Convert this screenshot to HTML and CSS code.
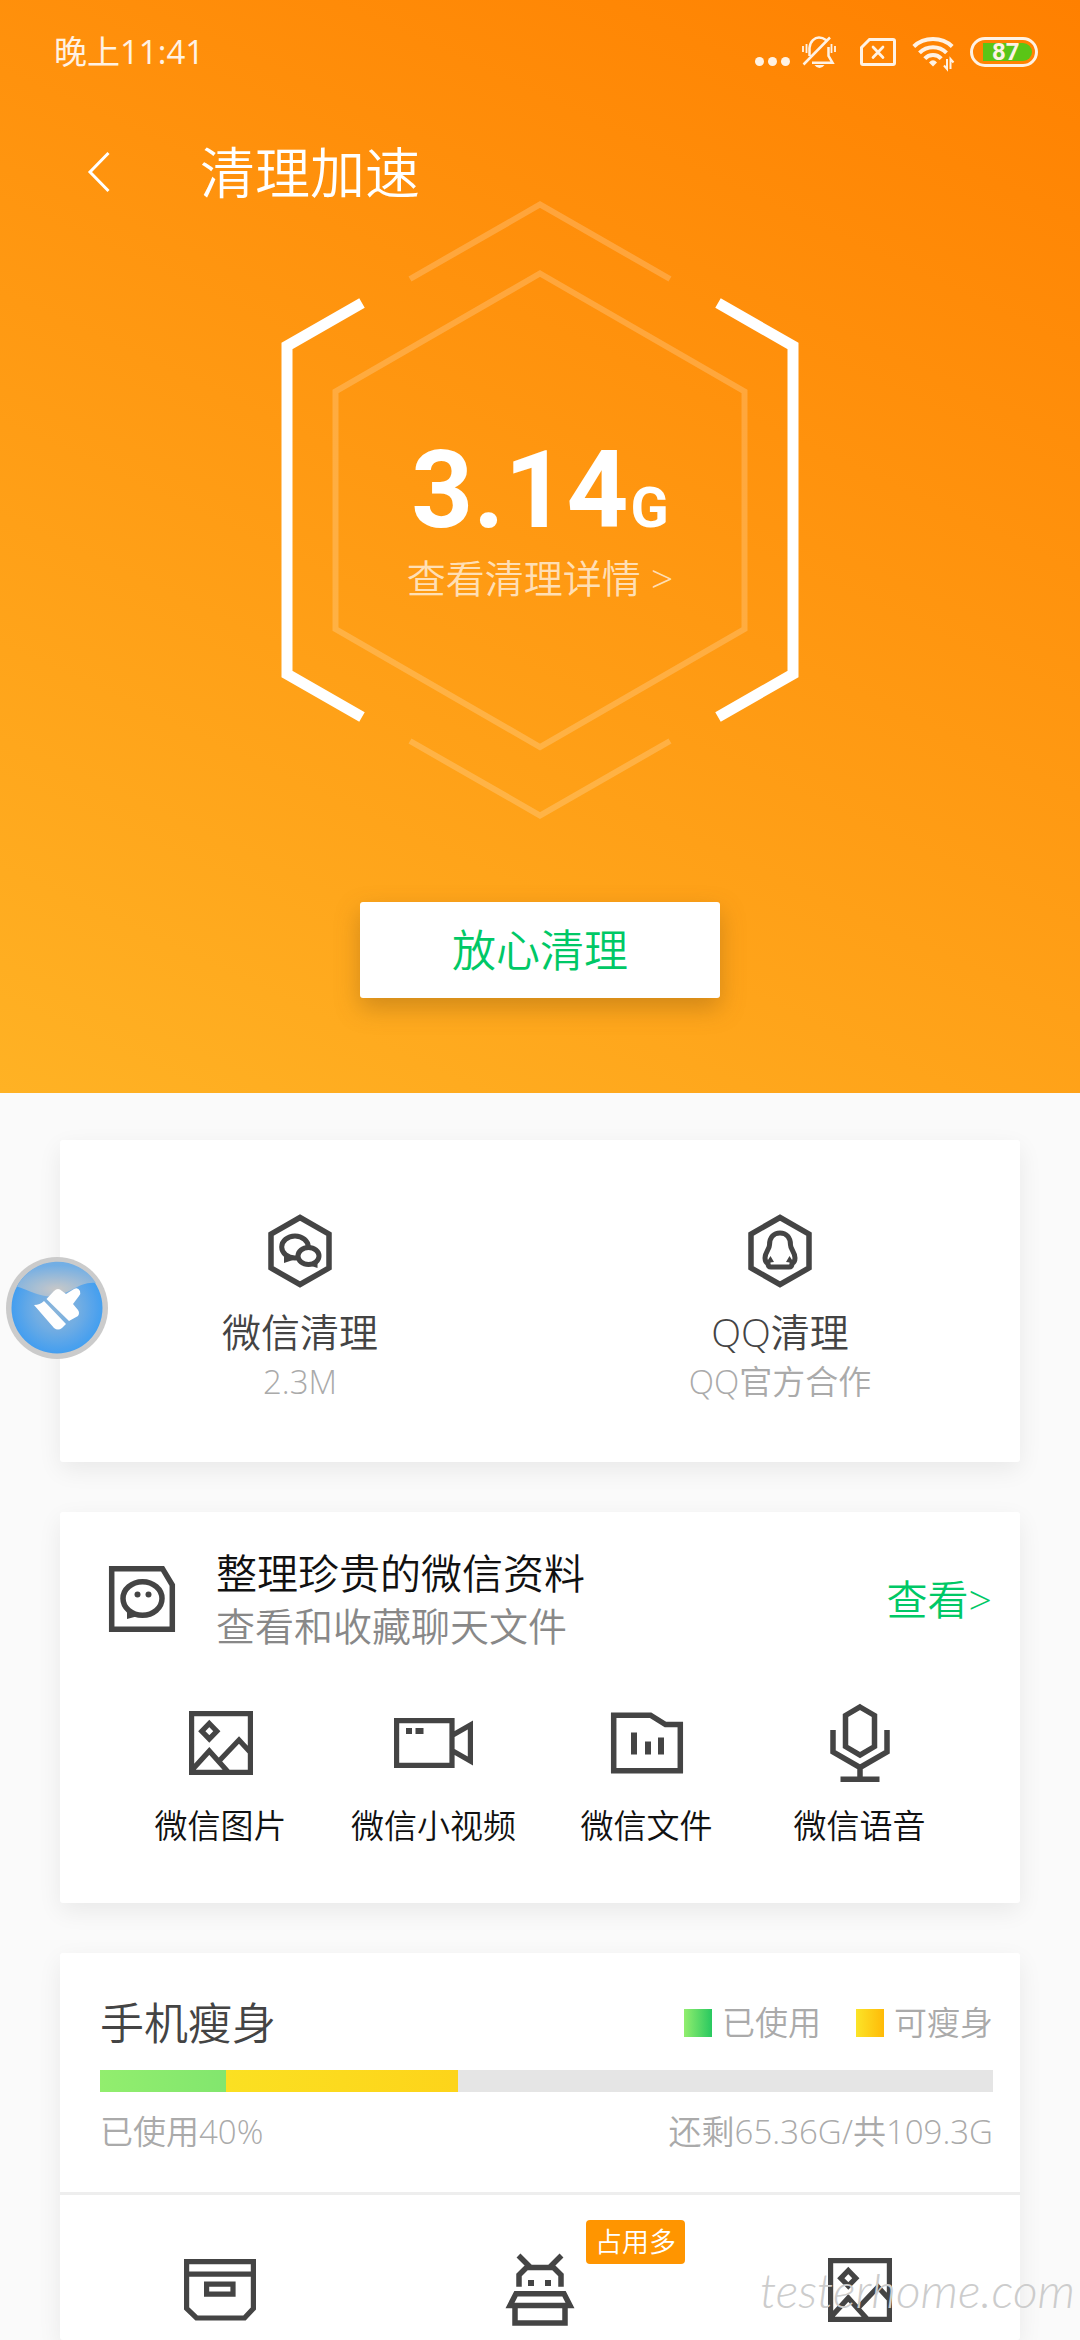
FILE: index.html
```html
<!DOCTYPE html>
<html lang="zh-CN">
<head>
<meta charset="utf-8">
<meta name="viewport" content="width=device-width, initial-scale=1">
<title>清理加速</title>
<link rel="stylesheet" href="styles.css">
</head>
<body>
<div class="page">
  <header class="hero">
    <div class="status-bar">
      <span class="clock">晚上11:41</span>
      <div class="status-icons">
        <div class="notices">
          <svg width="35" height="32" viewBox="0 0 35 32" fill="#fff2e4"><circle cx="4.5" cy="25.500" r="4.500"/><circle cx="17.500" cy="25.500" r="4.500"/><circle cx="30.500" cy="25.500" r="4.500"/></svg>
          <svg width="34" height="32" viewBox="0 0 34 32" fill="none" stroke="#fff2e4" stroke-width="2.500"><path d="M7.500 20V12C8 5 13 1.500 17 1.500c3 0 5 1 7 2.500M26.500 11v9l4 6.700H10M1.500 28.500L28 1.500"/><path d="M1 10v6M4.500 8v9M29.500 8v9M33 10v6" stroke-width="1.800"/><path d="M12.500 29h10q-2 3-5 3t-5-3z" fill="#fff2e4" stroke="none"/></svg>
        </div>
        <svg width="36" height="28" viewBox="0 0 36 28" fill="none" stroke="#fff2e4" stroke-width="3"><path d="M1.500 9.500L9.500 1.500H33q1.500 0 1.500 1.500V25q0 1.500-1.500 1.500H3q-1.500 0-1.500-1.500z"/><path d="M13 9l10 10.500M23 9L13 19.500" stroke-linecap="round" stroke-width="2.700"/></svg>
        <svg width="42" height="32" viewBox="0 0 42 32" fill="none" stroke="#fff2e4" stroke-width="4"><path d="M1.800 10.500C12 .5 30 .5 40.200 10.500M7.500 16.800C15 9.300 27 9.300 34.500 16.800M12.800 22.600C17 17.800 25 17.800 29.200 22.600"/><path d="M17 26.500q4-4.500 8 0L21 30.500z" fill="#fff2e4" stroke="none"/><path d="M35 23v10l-3-3.500M38.500 33V23l3 3.500" stroke-width="2"/></svg>
        <div class="battery"><span class="battery-level">87</span></div>
      </div>
    </div>
    <div class="title-bar">
      <button class="back" aria-label="返回"><svg width="22" height="38" viewBox="0 0 22 38" fill="none" stroke="#fff" stroke-width="3"><path d="M20.500 0L2 19l18.500 19"/></svg></button>
      <h1 class="title">清理加速</h1>
    </div>
    <div class="gauge">
      <svg class="gauge-frame" width="520" height="620" viewBox="0 0 520 620" fill="none">
        <g stroke="#fff" stroke-opacity=".2" stroke-width="6"><path d="M130 79L260 4.500 390 79M130 541L260 615.500 390 541"/><path d="M260 73.500L464.500 191.500V429L260 547 55.500 429V191.500z"/></g>
        <g stroke="#fff" stroke-width="11"><path d="M82 103L7 146V474L82 517M438 103L513 146V474L438 517"/></g>
      </svg>
      <div class="gauge-text">
        <p class="amount">3.14<span class="unit">G</span></p>
        <a class="detail" href="#detail">查看清理详情 &gt;</a>
      </div>
    </div>
    <button class="clean">放心清理</button>
  </header>

  <main class="content">
    <section class="card apps">
      <a class="app" href="#wechat">
        <svg width="64" height="74" viewBox="0 0 64 74" fill="none" stroke="#444" stroke-width="5.500"><path d="M32 3.500L61 20v34L32 70.500 3 54V20z"/><ellipse cx="27" cy="33" rx="13.300" ry="11" stroke-width="5"/><path d="M16 41v8l9-3zM49.500 47v7l-9-3z" fill="#444" stroke="none"/><ellipse cx="40.500" cy="42" rx="10.500" ry="8.500" fill="#fff" stroke-width="5"/></svg>
        <span class="app-name">微信清理</span>
        <span class="app-note">2.3M</span>
      </a>
      <a class="app" href="#qq">
        <svg width="64" height="74" viewBox="0 0 64 74" fill="none" stroke="#444" stroke-width="5.500"><path d="M32 3.500L61 20v34L32 70.500 3 54V20z"/><path d="M21.500 31C21.500 23 26 19 32 19s10.500 4 10.500 12c0 4 4.500 7 4.500 13q0 4-3 5.500c0 2-1 3.500-3 3.500H23c-2 0-3-1.500-3-3.500q-3-1.500-3-5.500c0-6 4.500-9 4.500-13z" stroke-width="5"/><path d="M18 49l4.500-7 3.500 6zM46 49l-4.500-7-3.500 6z" fill="#444" stroke="none"/></svg>
        <span class="app-name">QQ清理</span>
        <span class="app-note">QQ官方合作</span>
      </a>
    </section>

    <section class="card archive">
      <div class="archive-head">
        <svg width="66" height="66" viewBox="0 0 66 66" fill="none" stroke="#444" stroke-width="5.500"><path d="M2.700 2.700H53.500L63.300 19V63.300H2.700z"/><ellipse cx="33.500" cy="32.500" rx="19.500" ry="16.800"/><circle cx="28.500" cy="28.500" r="3" fill="#444" stroke="none"/><circle cx="39.500" cy="28.500" r="3" fill="#444" stroke="none"/><path d="M18 42v11l11-3z" fill="#444" stroke="none"/></svg>
        <div class="archive-text">
          <h2 class="archive-title">整理珍贵的微信资料</h2>
          <p class="archive-note">查看和收藏聊天文件</p>
        </div>
        <a class="view" href="#archive">查看&gt;</a>
      </div>
      <div class="kinds">
        <a class="kind" href="#images">
          <svg class="kind-icon" width="64" height="64" viewBox="0 0 64 64" fill="none" stroke="#444" stroke-width="5.200"><path d="M2.600 2.600H61.400V61.400H2.600zM20.300 12.500l7.500 7.700-7.500 7.700-7.500-7.700zM3 59L20.300 40 40 62M31 49L50 29l11 12"/></svg>
          <span>微信图片</span>
        </a>
        <a class="kind" href="#videos">
          <svg class="kind-icon" width="80" height="50" viewBox="0 0 80 50" fill="none" stroke="#444" stroke-width="5.200"><path d="M2.600 2.600H58V47.400H2.600zM58 17.500L76.400 7V43L58 32.500"/><path d="M12 10h6v6h-6zM21.500 10h8v6h-8z" fill="#444" stroke="none"/></svg>
          <span>微信小视频</span>
        </a>
        <a class="kind" href="#files">
          <svg class="kind-icon" width="72" height="61" viewBox="0 0 72 61" fill="none" stroke="#444" stroke-width="5.500"><path d="M2.700 2.700H39.500L54.500 12H69.300V58.300H2.700z"/><path d="M20 20h6v22h-6zM34 29h6v13h-6zM47 25h6v17h-6z" fill="#444" stroke="none"/></svg>
          <span>微信文件</span>
        </a>
        <a class="kind" href="#voices">
          <svg class="kind-icon" width="60" height="78" viewBox="0 0 60 78" fill="none" stroke="#444" stroke-width="5.500"><path d="M30 3L44.500 11.500V42.500L30 51 15.500 42.500V11.500zM3 26V48L30 63.500 57 48V26M30 63v10M10.500 75.200H49.500"/></svg>
          <span>微信语音</span>
        </a>
      </div>
    </section>

    <section class="card storage">
      <div class="storage-summary">
        <div class="row">
          <h2 class="storage-title">手机瘦身</h2>
          <ul class="legend">
            <li class="legend-item"><i class="swatch swatch-used"></i>已使用</li>
            <li class="legend-item"><i class="swatch swatch-slim"></i>可瘦身</li>
          </ul>
        </div>
        <div class="meter">
          <div class="meter-used" style="width:14.100%"></div>
          <div class="meter-slim" style="width:26%"></div>
        </div>
        <div class="row note">
          <span>已使用40%</span>
          <span>还剩65.36G/共109.3G</span>
        </div>
      </div>
      <div class="tools">
        <a class="tool" href="#packages" aria-label="安装包">
          <svg width="72" height="62" viewBox="0 0 72 62" fill="none" stroke="#444" stroke-width="5.200"><path d="M2.600 2.600H69.400V49.500L60.500 59H12.500L2.600 49.500zM2.600 15.200H69.400M22.600 25.200H49V35.200H22.600z"/></svg>
        </a>
        <a class="tool" href="#software" aria-label="软件">
          <svg width="68" height="72" viewBox="0 0 68 72" fill="none" stroke="#444" stroke-width="5.500"><path d="M12.500 1.500L25 14M55.500 1.500L43 14M13 32.700V21L20.500 13.500H47.500L55 21V32.700M10 39.700H58L64 51.500H4zM9 51.500V69H59V51.500"/><path d="M22 26h6v6h-6zM39 26h6v6h-6z" fill="#444" stroke="none"/></svg>
          <span class="badge">占用多</span>
        </a>
        <a class="tool" href="#photos" aria-label="图片">
          <svg width="64" height="64" viewBox="0 0 64 64" fill="none" stroke="#444" stroke-width="5.200"><path d="M2.600 2.600H61.400V61.400H2.600zM20.300 12.500l7.500 7.700-7.500 7.700-7.500-7.700zM3 59L20.300 40 40 62M31 49L50 29l11 12"/></svg>
        </a>
      </div>
    </section>
  </main>

  <button class="float-ball" aria-label="加速">
    <svg width="102" height="102" viewBox="0 0 102 102">
      <defs>
        <radialGradient id="ball"><stop offset="0" stop-color="#86b2d8"/><stop offset=".5" stop-color="#6aa9e2"/><stop offset="1" stop-color="#3a9af0"/></radialGradient>
        <radialGradient id="gloss" cx=".5" cy=".8" r=".7"><stop offset="0" stop-color="#c6c6c6"/><stop offset="1" stop-color="#6cabe4"/></radialGradient>
      </defs>
      <circle cx="51" cy="51" r="51" fill="#c9c9c9"/>
      <circle cx="51" cy="51" r="45.500" fill="url(#ball)"/>
      <path d="M11 29.500A45.500 45.500 0 0 1 90 26C73 24 62 39 45 39.500 33 39.500 25 34 11 29.500z" fill="url(#gloss)"/>
      <path d="M40.500 42L48 34q4-4 8 0l4 3 8-5q4-2 6 2 1 3-1 5l-6 8 5 6q2 3 0 6L63 64zM28 48q6 0 10-4L60 67l-4 4q-4 3-8 0z" fill="#fff"/>
    </svg>
  </button>
  <div class="watermark">testerhome.com</div>
</div>
</body>
</html>
```
FILE: styles.css
```css
* { box-sizing: border-box; margin: 0; padding: 0; }

body {
  background: #fafafa;
  color: #444;
  font-family: "Open Sans", "Noto Sans CJK SC", sans-serif;
  font-weight: 350;
}

a { color: inherit; text-decoration: none; }
button { border: 0; background: none; font: inherit; cursor: pointer; }
svg { display: block; flex: none; overflow: visible; }
ul { list-style: none; }
h1, h2 { font-weight: inherit; }

.page {
  position: relative;
  display: flex;
  flex-direction: column;
  min-height: 100vh;
  overflow: hidden;
}

/* Orange header */
.hero {
  display: flex;
  flex-direction: column;
  align-items: center;
  padding-bottom: 95px;
  background: linear-gradient(205deg, #ff8000, #ffb224);
  color: #fff;
}

.status-bar {
  display: flex;
  justify-content: space-between;
  align-items: center;
  align-self: stretch;
  height: 104px;
  padding: 0 42px 0 54px;
}
.clock { font-size: 33px; line-height: 48px; font-weight: 400; color: #fff2e4; }
.status-icons { display: flex; align-items: center; gap: 16px; }
.notices { display: flex; gap: 12px; margin-right: 8px; }

.battery {
  width: 68px;
  height: 30px;
  padding: 3px;
  border: 3px solid #fff2e4;
  border-radius: 15px;
}
.battery-level {
  display: block;
  width: 49px;
  height: 18px;
  margin-left: auto;
  padding-left: 9px;
  border-radius: 0 9px 9px 0;
  background: #5ac516;
  color: #fff2e4;
  font: 700 24px/18px Roboto, sans-serif;
}

.title-bar {
  display: flex;
  align-items: center;
  align-self: stretch;
  gap: 90px;
  height: 56px;
  margin-top: 40px;
  padding: 0 88px;
}
.title { font-size: 55px; line-height: 56px; }

.gauge { display: grid; place-items: center; }
.gauge > * { grid-area: 1 / 1; }
.gauge-text {
  display: flex;
  flex-direction: column;
  align-items: center;
  gap: 8px;
  padding-top: 16px;
}
.amount { font: 700 108px/112px Roboto, sans-serif; }
.unit { margin-left: 2px; font-size: 56px; line-height: 56px; }
.detail {
  font-size: 39px;
  line-height: 48px;
  color: rgba(255, 255, 255, .7);
}

.clean {
  width: 360px;
  height: 96px;
  margin-top: 82px;
  border-radius: 3px;
  background: #fff;
  box-shadow: 0 10px 24px rgba(120, 80, 20, .35);
  color: #00c866;
  font-size: 44px;
  line-height: 64px;
}

/* Cards */
.content {
  flex: 1;
  display: flex;
  flex-direction: column;
  gap: 50px;
  padding: 47px 60px 0;
}
.card {
  border-radius: 3px;
  background: #fff;
  box-shadow: 0 8px 24px rgba(0, 0, 0, .07);
}

.apps { display: flex; padding: 74px 0 56px; }
.app {
  flex: 1;
  display: flex;
  flex-direction: column;
  align-items: center;
}
.app-name { margin-top: 18px; font-size: 39px; line-height: 52px; }
.app-note { font-size: 33px; line-height: 48px; color: #aaa; }

.archive { padding: 34px 28px 53px 49px; }
.archive-head { display: flex; align-items: center; }
.archive-text { flex: 1; margin-left: 41px; }
.archive-title { font-size: 41px; line-height: 54px; color: #111; }
.archive-note { font-size: 39px; line-height: 52px; color: #888; }
.view { font-size: 41px; line-height: 54px; color: #00c866; }

.kinds { display: flex; padding: 51px 26px 0 5px; }
.kind {
  flex: 1;
  display: flex;
  flex-direction: column;
  align-items: center;
  gap: 19px;
  color: #111;
  font-size: 33px;
  line-height: 48px;
}
.kind-icon { height: 80px; }

.storage { flex: 1; }
.storage-summary {
  padding: 38px 27px 36px 40px;
  border-bottom: 3px solid #eee;
}
.row { display: flex; justify-content: space-between; align-items: center; }
.storage-title { font-size: 44px; line-height: 64px; }
.legend { display: flex; gap: 35px; }
.legend-item {
  display: flex;
  align-items: center;
  gap: 10px;
  color: #aaa;
  font-size: 33px;
  line-height: 48px;
}
.swatch { width: 28px; height: 28px; }
.swatch-used { background: linear-gradient(90deg, #92ee6e, #28c860); }
.swatch-slim { background: linear-gradient(90deg, #fbe428, #ffba08); }
.meter { display: flex; height: 22px; margin: 15px 0 16px; background: #e5e5e5; }
.meter-used { background: linear-gradient(90deg, #92ee6e, #82e66e); }
.meter-slim { background: linear-gradient(90deg, #fbe022, #fdd41a); }
.note { color: #aaa; font-size: 33px; line-height: 48px; }

.tools { display: flex; align-items: center; padding-top: 59px; }
.tool { position: relative; flex: 1; display: flex; justify-content: center; }
.badge {
  position: absolute;
  left: calc(50% + 46px);
  top: -34px;
  padding: 0 9px;
  border-radius: 4px;
  background: #ff9500;
  color: #fff;
  font-size: 27px;
  line-height: 44px;
  white-space: nowrap;
}

/* Overlays */
.float-ball { position: absolute; left: 6px; top: 1257px; border-radius: 50%; opacity: .95; }
.watermark {
  position: absolute;
  right: 5px;
  bottom: 22px;
  color: #ccc;
  font: italic 300 48px/56px Lato, sans-serif;
}
```
